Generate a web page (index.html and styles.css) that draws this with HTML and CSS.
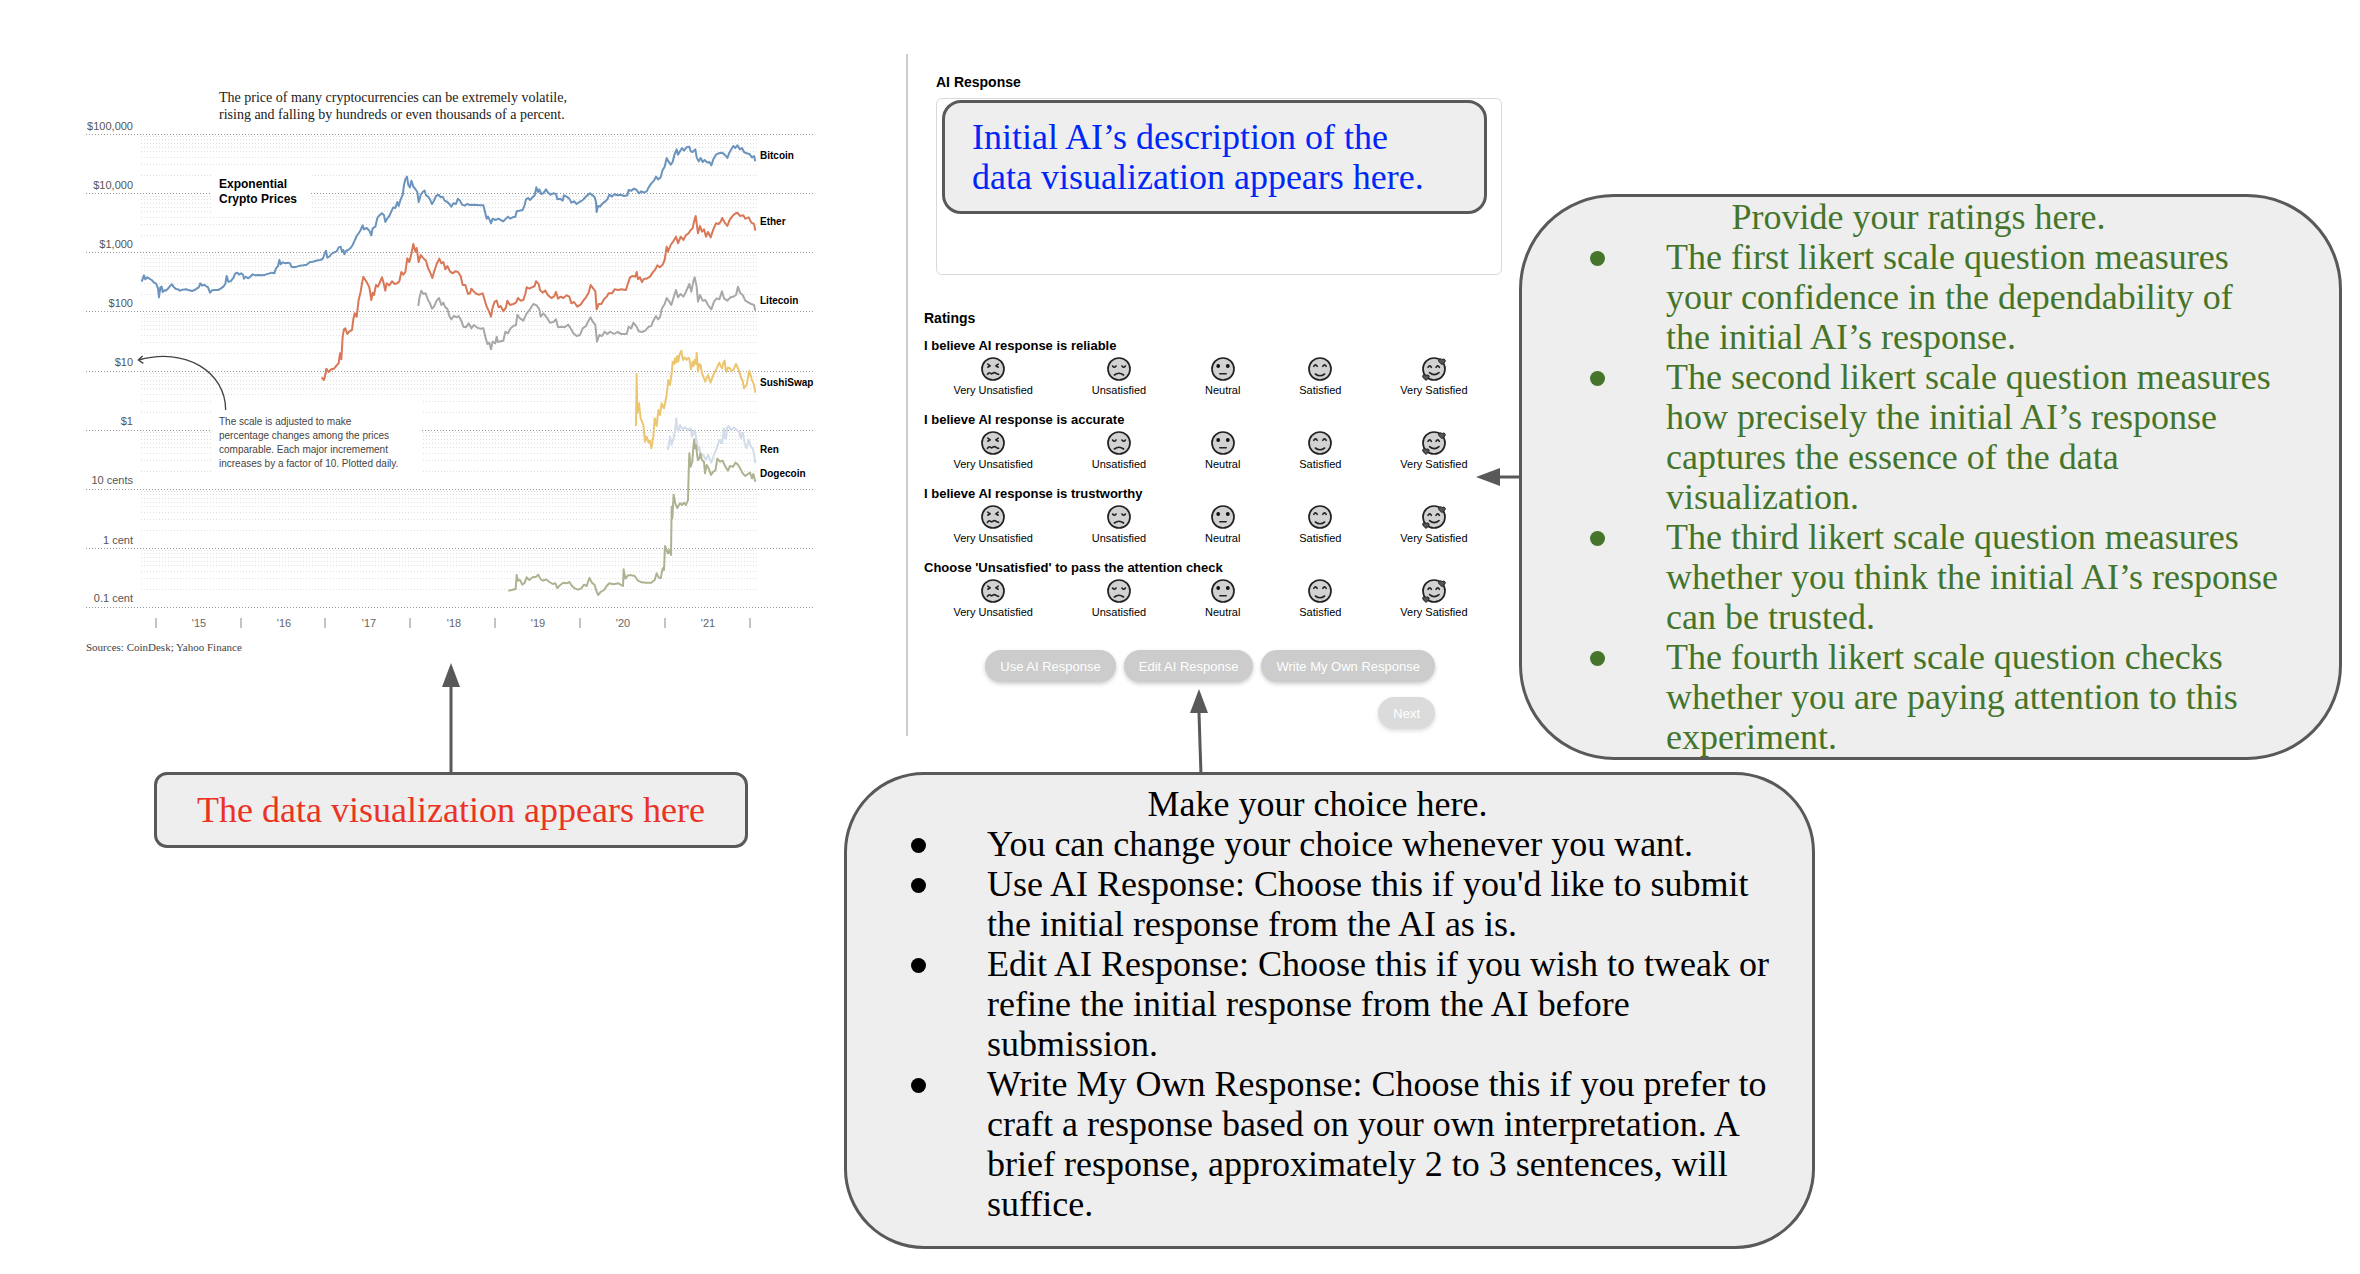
FILE: index.html
```html
<!DOCTYPE html>
<html lang="en">
<head>
<meta charset="utf-8">
<title>Study instructions</title>
<link rel="stylesheet" href="styles.css">
</head>
<body>
<svg class="defs" aria-hidden="true">
  <symbol id="face-very-unsatisfied" viewBox="0 0 24 24">
    <circle class="skin" cx="12" cy="12" r="11"/>
    <path class="ink" d="M6.8 7.2 9.2 8.8 6.8 10.2M17.2 7.2 14.8 8.8 17.2 10.2M6.4 17.4q1.4-2.4 2.8-1.2t2.8 0 2.8 0 2.8 1.2"/>
  </symbol>
  <symbol id="face-unsatisfied" viewBox="0 0 24 24">
    <circle class="skin" cx="12" cy="12" r="11"/>
    <path class="ink" d="M5.6 9q1.7 2.4 3.4 0M15 9q1.7 2.4 3.4 0M7.4 18q4.6-3.6 9.2 0"/>
  </symbol>
  <symbol id="face-neutral" viewBox="0 0 24 24">
    <circle class="skin" cx="12" cy="12" r="11"/>
    <circle class="dot" cx="7.2" cy="9" r="1.9"/><circle class="dot" cx="16.8" cy="9" r="1.9"/>
    <path class="ink" d="M8.8 16.8h6.4"/>
  </symbol>
  <symbol id="face-satisfied" viewBox="0 0 24 24">
    <circle class="skin" cx="12" cy="12" r="11"/>
    <path class="ink" d="M5.8 9.4q1.7-3 3.4 0M14.8 9.4q1.7-3 3.4 0M7.4 17q4.6 3.4 9.2 0"/>
  </symbol>
  <symbol id="face-very-satisfied" viewBox="0 0 24 24">
    <circle class="skin" cx="12" cy="12" r="11"/>
    <path class="ink" d="M6 10.4q1.7-3 3.4 0M14 10.4q1.7-3 3.4 0M7.6 15.6q4.6 4 9.4 0"/>
    <path class="heart" d="M20 7.6 16.8 4.6q-.9-2.4 1.2-2.8 1.4-.1 2 1 .8-1.1 2.2-.7 1.8.9.8 2.8Z"/>
    <path class="heart" d="M4 23.400 .9 20.400q-.8-2.3 1.1-2.700 1.4-.1 2 1 .8-1.1 2.2-.7 1.7.9.7 2.700Z"/>
  </symbol>
</svg>

<main class="page">
  <div class="top">
    <figure class="chart">
      <svg class="plot" viewBox="80 80 740 580" role="img" aria-label="Exponential crypto prices">
        <defs>
          <g id="decade" class="minor">
            <path d="M141 2.500H757M141 5.500H757M141 9.500H757M141 13.500H757M141 17.500H757M141 23.500H757M141 30.500H757M141 41.500H757"/>
          </g>
        </defs>
        <use href="#decade" y="134"/><use href="#decade" y="194"/><use href="#decade" y="253"/><use href="#decade" y="312"/>
        <use href="#decade" y="371"/><use href="#decade" y="430"/><use href="#decade" y="489"/><use href="#decade" y="548"/>
        <path class="major" d="M86 134.500H815M86 193.500H815M86 252.500H815M86 311.500H815M86 371.500H815M86 430.500H815M86 489.500H815M86 548.500H815M86 607.500H815"/>
        <rect class="blank" x="211" y="174" width="100" height="40"/>
        <rect class="blank" x="211" y="395" width="211" height="86"/>

        <g class="lines" transform="translate(60 70) scale(.33333)">
          <polyline class="btc" points="245,635 252,616 256,628 262,622 268,626 275,630 282,638 288,640 294,655 297,682 301,652 305,650 308,666 313,661 318,662 325,655 330,648 336,643 342,652 348,657 354,658 360,662 368,659 378,658 388,661 396,663 404,660 410,656 416,652 421,640 426,647 432,644 438,648 444,652 450,668 456,661 464,660 474,660 482,656 490,650 496,642 500,618 505,635 512,634 520,624 526,610 532,608 537,614 544,610 549,614 552,626 558,620 564,625 572,619 578,613 586,616 596,615 606,616 616,614 626,611 636,608 643,610 648,595 654,588 658,570 662,583 668,577 676,580 684,578 690,580 694,590 702,592 710,590 720,587 730,586 740,584 750,576 758,575 766,573 774,571 780,570 788,567 794,552 798,542 802,563 808,560 814,552 822,547 830,544 836,532 842,530 846,545 850,540 853,553 858,543 864,540 872,534 878,525 884,512 890,498 896,490 902,480 908,466 912,478 920,474 928,482 934,496 938,475 946,470 952,444 958,436 966,430 972,436 976,456 982,445 988,438 994,424 1000,412 1006,414 1012,396 1016,408 1022,388 1028,375 1032,345 1036,328 1041,320 1045,345 1050,352 1054,332 1060,350 1066,357 1072,366 1076,396 1082,376 1088,366 1094,362 1098,376 1104,380 1110,388 1116,402 1122,392 1128,378 1136,374 1142,382 1148,380 1154,392 1162,396 1168,402 1174,410 1180,400 1188,402 1194,386 1200,392 1206,404 1214,407 1222,402 1230,405 1240,404 1250,405 1260,406 1270,406 1276,430 1280,446 1284,440 1290,452 1293,460 1298,446 1306,450 1316,446 1322,450 1330,454 1338,446 1344,440 1350,446 1358,442 1366,440 1370,424 1378,422 1388,420 1394,405 1398,388 1404,384 1410,390 1418,382 1424,376 1429,352 1434,366 1438,358 1444,372 1450,370 1458,358 1464,368 1472,374 1480,370 1488,372 1492,388 1500,386 1508,392 1512,376 1520,380 1528,386 1534,398 1542,394 1550,402 1558,396 1566,392 1574,384 1582,376 1590,370 1598,376 1604,382 1608,396 1610,426 1614,408 1620,410 1628,400 1636,394 1642,388 1648,374 1656,380 1664,372 1672,376 1682,374 1692,378 1702,376 1706,360 1714,362 1722,356 1730,360 1736,370 1744,364 1752,368 1760,364 1766,352 1774,340 1782,332 1788,320 1794,328 1802,322 1808,300 1814,290 1820,264 1824,272 1832,284 1838,276 1844,252 1850,238 1854,254 1860,244 1866,234 1872,242 1880,232 1888,230 1892,244 1898,246 1906,238 1910,262 1916,274 1922,264 1928,276 1934,270 1942,278 1948,276 1954,286 1960,268 1968,254 1976,250 1986,248 1994,254 2002,264 2008,248 2014,238 2020,228 2026,234 2032,226 2040,238 2046,234 2052,246 2060,250 2068,252 2076,262 2082,258 2086,274"/>
          <polyline class="ltc" points="1075,708 1078,685 1084,662 1090,672 1097,670 1104,690 1110,700 1116,716 1122,710 1130,692 1137,684 1144,705 1150,698 1156,712 1162,716 1168,738 1174,748 1182,738 1190,742 1196,738 1204,752 1210,770 1218,772 1226,760 1234,775 1242,765 1250,772 1260,776 1270,775 1276,800 1282,822 1288,818 1293,838 1298,815 1306,820 1310,800 1314,816 1322,814 1330,812 1336,785 1344,790 1352,775 1360,768 1368,765 1372,735 1380,745 1390,752 1400,730 1410,718 1420,702 1430,706 1438,718 1442,740 1450,730 1460,742 1470,758 1480,756 1488,748 1494,772 1504,770 1514,772 1524,764 1530,772 1540,790 1550,798 1560,795 1568,775 1578,768 1584,755 1592,742 1598,755 1606,765 1611,815 1618,795 1626,798 1634,785 1642,792 1650,785 1662,792 1672,786 1684,792 1700,792 1706,770 1714,775 1720,758 1730,770 1736,784 1746,786 1756,782 1766,770 1774,768 1780,752 1788,738 1794,748 1800,742 1806,715 1814,702 1820,684 1828,695 1834,705 1840,685 1848,660 1854,682 1862,672 1870,680 1878,665 1888,642 1894,665 1900,635 1904,622 1910,650 1914,695 1920,675 1928,692 1936,690 1944,705 1954,718 1962,695 1970,685 1978,688 1986,664 1992,685 2002,692 2012,682 2020,680 2028,675 2034,650 2040,668 2048,675 2056,692 2066,698 2074,702 2082,705 2086,722"/>
          <polyline class="eth" points="785,922 792,930 797,910 799,896 806,906 814,898 822,896 830,886 836,880 840,850 844,868 848,800 852,778 856,775 862,792 868,784 876,780 880,748 884,730 890,740 896,690 902,665 906,640 910,620 916,630 922,640 928,652 934,690 938,668 942,675 948,645 954,650 960,636 966,622 971,640 976,662 980,640 988,646 996,634 1004,642 1012,640 1018,634 1024,606 1030,614 1036,606 1042,565 1048,576 1054,552 1060,522 1066,545 1070,534 1076,576 1082,555 1090,565 1098,572 1104,594 1110,606 1117,624 1122,606 1130,582 1138,566 1144,580 1150,576 1156,598 1162,588 1170,604 1178,610 1186,604 1194,606 1202,618 1208,645 1216,645 1224,672 1230,670 1234,656 1242,665 1250,672 1258,674 1268,670 1274,690 1280,710 1286,722 1293,740 1298,712 1304,695 1310,692 1316,712 1322,708 1330,724 1338,712 1342,692 1350,705 1360,702 1368,698 1374,684 1382,692 1390,690 1396,672 1400,652 1408,656 1416,652 1424,648 1428,634 1436,642 1440,660 1448,668 1456,662 1464,676 1474,684 1482,680 1488,666 1494,686 1502,680 1510,684 1520,676 1528,680 1534,700 1542,696 1552,710 1562,704 1570,692 1578,682 1586,668 1592,645 1600,656 1606,664 1610,718 1616,702 1624,702 1632,688 1640,680 1646,670 1656,670 1664,658 1674,660 1684,658 1698,660 1704,640 1710,622 1718,618 1726,620 1730,606 1734,628 1740,622 1746,636 1752,626 1760,626 1770,620 1778,608 1786,598 1792,586 1800,592 1808,584 1814,570 1820,530 1824,545 1832,525 1840,514 1848,500 1854,520 1862,500 1870,510 1878,495 1886,490 1892,480 1898,475 1902,455 1907,438 1914,490 1920,468 1926,485 1932,478 1938,500 1944,486 1952,502 1960,478 1968,460 1976,462 1982,455 1987,444 1994,458 2002,468 2008,452 2016,440 2024,432 2032,428 2040,438 2050,436 2056,446 2066,442 2074,458 2082,462 2086,482"/>
        </g>
        <g class="lines" transform="translate(440 340) scale(.33333)">
          <polyline class="sushi" points="588,258 590,102 592,220 597,190 602,235 610,255 615,305 620,290 626,308 630,302 634,325 640,290 644,235 650,258 655,210 660,225 665,190 672,205 680,165 685,120 690,135 695,100 698,65 702,72 705,55 708,68 712,48 715,65 718,45 724,32 727,52 730,60 734,52 740,60 744,54 748,55 753,88 758,65 761,78 764,60 768,72 770,38 774,95 778,72 782,75 786,100 790,110 796,125 804,105 812,128 820,105 830,85 838,68 842,78 846,85 850,68 854,62 857,90 860,95 864,82 870,85 874,94 880,90 888,72 896,90 904,115 908,122 912,145 920,135 928,92 936,120 942,135 946,158"/>
          <polyline class="ren" points="684,330 690,290 695,315 702,290 706,265 709,235 712,270 716,272 720,255 728,268 736,262 744,270 752,265 756,290 760,278 764,272 768,290 770,300 774,330 778,320 782,345 790,345 798,360 804,345 814,368 822,345 830,325 838,300 846,310 852,265 855,295 858,295 862,262 866,258 874,270 882,262 890,270 898,275 902,295 908,278 914,310 920,325 926,300 932,318 940,330 946,370"/>
          <polyline class="doge" points="205,752 215,750 227,747 230,705 234,722 240,720 247,734 254,728 260,712 268,720 278,712 288,710 295,704 302,718 310,722 318,718 328,726 338,732 346,730 352,744 360,736 370,728 380,730 388,726 396,738 404,745 414,749 424,745 432,734 440,738 448,714 456,728 464,735 470,755 474,765 482,756 492,750 500,738 508,730 520,733 535,730 549,738 551,688 556,716 564,706 574,706 584,708 594,722 605,727 618,728 634,728 644,720 650,700 656,712 662,715 668,685 672,690 675,618 680,630 684,640 688,630 693,645 695,500 697,535 701,464 706,490 712,504 720,490 726,495 732,488 738,495 744,480 746,400 748,340 752,380 757,365 760,320 763,298 765,325 768,315 772,350 774,360 778,355 781,340 786,360 792,365 795,400 800,375 806,385 813,405 820,395 826,392 832,356 840,365 848,362 856,380 864,392 870,378 880,380 886,368 894,374 902,388 908,400 916,408 924,402 930,398 936,415 940,402 946,425"/>
        </g>
        <g class="pointer" transform="translate(60 340) scale(.33333)">
          <path d="M497 210C497 95 375 20 236 60M248 48 235 60 250 70"/>
        </g>

        <g class="lead">
          <text x="219" y="102">The price of many cryptocurrencies can be extremely volatile,</text>
          <text x="219" y="119">rising and falling by hundreds or even thousands of a percent.</text>
        </g>
        <g class="heading">
          <text x="219" y="188">Exponential</text>
          <text x="219" y="203">Crypto Prices</text>
        </g>
        <g class="axis-y">
          <text x="133" y="130">$100,000</text><text x="133" y="189">$10,000</text><text x="133" y="248">$1,000</text>
          <text x="133" y="307">$100</text><text x="133" y="366">$10</text><text x="133" y="425">$1</text>
          <text x="133" y="484">10 cents</text><text x="133" y="544">1 cent</text><text x="133" y="602">0.1 cent</text>
        </g>
        <g class="note">
          <text x="219" y="425">The scale is adjusted to make</text>
          <text x="219" y="439">percentage changes among the prices</text>
          <text x="219" y="453">comparable. Each major incremement</text>
          <text x="219" y="467">increases by a factor of 10. Plotted daily.</text>
        </g>
        <g class="series">
          <text x="760" y="159">Bitcoin</text><text x="760" y="225">Ether</text><text x="760" y="304">Litecoin</text>
          <text x="760" y="386">SushiSwap</text><text x="760" y="453">Ren</text><text x="760" y="477">Dogecoin</text>
        </g>
        <path class="ticks" d="M156 618v10M241 618v10M325 618v10M410 618v10M495 618v10M580 618v10M665 618v10M750 618v10"/>
        <g class="axis-x">
          <text x="199" y="627">'15</text><text x="284" y="627">'16</text><text x="369" y="627">'17</text><text x="454" y="627">'18</text>
          <text x="538" y="627">'19</text><text x="623" y="627">'20</text><text x="708" y="627">'21</text>
        </g>
        <text class="source" x="86" y="651">Sources: CoinDesk; Yahoo Finance</text>
      </svg>
    </figure>

    <form class="survey">
      <div class="response">
        <label class="title" for="ai-response">AI Response</label>
        <textarea id="ai-response" class="response-box" readonly></textarea>
        <p class="callout callout-initial">Initial AI’s description of the<br>data visualization appears here.</p>
      </div>
      <section class="ratings">
        <h2 class="title">Ratings</h2>
        <fieldset class="question">
          <legend>I believe AI response is reliable</legend>
          <div class="scale">
            <label><input type="radio" name="reliable"><svg class="face"><use href="#face-very-unsatisfied"/></svg>Very Unsatisfied</label>
            <label><input type="radio" name="reliable"><svg class="face"><use href="#face-unsatisfied"/></svg>Unsatisfied</label>
            <label><input type="radio" name="reliable"><svg class="face"><use href="#face-neutral"/></svg>Neutral</label>
            <label><input type="radio" name="reliable"><svg class="face"><use href="#face-satisfied"/></svg>Satisfied</label>
            <label><input type="radio" name="reliable"><svg class="face"><use href="#face-very-satisfied"/></svg>Very Satisfied</label>
          </div>
        </fieldset>
        <fieldset class="question">
          <legend>I believe AI response is accurate</legend>
          <div class="scale">
            <label><input type="radio" name="accurate"><svg class="face"><use href="#face-very-unsatisfied"/></svg>Very Unsatisfied</label>
            <label><input type="radio" name="accurate"><svg class="face"><use href="#face-unsatisfied"/></svg>Unsatisfied</label>
            <label><input type="radio" name="accurate"><svg class="face"><use href="#face-neutral"/></svg>Neutral</label>
            <label><input type="radio" name="accurate"><svg class="face"><use href="#face-satisfied"/></svg>Satisfied</label>
            <label><input type="radio" name="accurate"><svg class="face"><use href="#face-very-satisfied"/></svg>Very Satisfied</label>
          </div>
        </fieldset>
        <fieldset class="question">
          <legend>I believe AI response is trustworthy</legend>
          <div class="scale">
            <label><input type="radio" name="trustworthy"><svg class="face"><use href="#face-very-unsatisfied"/></svg>Very Unsatisfied</label>
            <label><input type="radio" name="trustworthy"><svg class="face"><use href="#face-unsatisfied"/></svg>Unsatisfied</label>
            <label><input type="radio" name="trustworthy"><svg class="face"><use href="#face-neutral"/></svg>Neutral</label>
            <label><input type="radio" name="trustworthy"><svg class="face"><use href="#face-satisfied"/></svg>Satisfied</label>
            <label><input type="radio" name="trustworthy"><svg class="face"><use href="#face-very-satisfied"/></svg>Very Satisfied</label>
          </div>
        </fieldset>
        <fieldset class="question">
          <legend>Choose 'Unsatisfied' to pass the attention check</legend>
          <div class="scale">
            <label><input type="radio" name="attention"><svg class="face"><use href="#face-very-unsatisfied"/></svg>Very Unsatisfied</label>
            <label><input type="radio" name="attention"><svg class="face"><use href="#face-unsatisfied"/></svg>Unsatisfied</label>
            <label><input type="radio" name="attention"><svg class="face"><use href="#face-neutral"/></svg>Neutral</label>
            <label><input type="radio" name="attention"><svg class="face"><use href="#face-satisfied"/></svg>Satisfied</label>
            <label><input type="radio" name="attention"><svg class="face"><use href="#face-very-satisfied"/></svg>Very Satisfied</label>
          </div>
        </fieldset>
      </section>
      <div class="actions">
        <button type="button">Use AI Response</button>
        <button type="button">Edit AI Response</button>
        <button type="button">Write My Own Response</button>
        <button type="submit" class="next">Next</button>
      </div>
    </form>

    <section class="callout callout-ratings">
      <svg class="arrow arrow-left" viewBox="0 0 46 20"><path d="M24 10H46"/><path class="head" d="M0 10 24 1V19Z"/></svg>
      <p class="callout-title">Provide your ratings here.</p>
      <ul>
        <li>The first likert scale question measures<br>your confidence in the dependability of<br>the initial AI’s response.</li>
        <li>The second likert scale question measures<br>how precisely the initial AI’s response<br>captures the essence of the data<br>visualization.</li>
        <li>The third likert scale question measures<br>whether you think the initial AI’s response<br>can be trusted.</li>
        <li>The fourth likert scale question checks<br>whether you are paying attention to this<br>experiment.</li>
      </ul>
    </section>
  </div>

  <div class="bottom">
    <p class="callout callout-chart">
      <svg class="arrow arrow-chart" viewBox="0 0 20 112"><path d="M10 24V112"/><path class="head" d="M10 0 1 24H19Z"/></svg>
      The data visualization appears here
    </p>
    <section class="callout callout-choice">
      <svg class="arrow arrow-choice" viewBox="0 0 20 86"><path d="M9 24 11 86"/><path class="head" d="M9 0 0 24H18Z"/></svg>
      <p class="callout-title">Make your choice here.</p>
      <ul>
        <li>You can change your choice whenever you want.</li>
        <li>Use AI Response: Choose this if you'd like to submit<br>the initial response from the AI as is.</li>
        <li>Edit AI Response: Choose this if you wish to tweak or<br>refine the initial response from the AI before<br>submission.</li>
        <li>Write My Own Response: Choose this if you prefer to<br>craft a response based on your own interpretation. A<br>brief response, approximately 2 to 3 sentences, will<br>suffice.</li>
      </ul>
    </section>
  </div>
</main>
</body>
</html>
```

FILE: styles.css
```css
* { box-sizing: border-box; }

body {
  margin: 0;
  background: #fff;
  color: #000;
  font-family: "Liberation Sans", Arial, sans-serif;
}

p, h2, ul, figure, fieldset { margin: 0; padding: 0; }
fieldset { border: 0; min-width: 0; }
ul { list-style: none; }

.defs { position: absolute; width: 0; height: 0; }

.page {
  display: grid;
  gap: 12px;
  padding: 54px 0 20px;
}

.top {
  display: grid;
  grid-template-columns: 906fr 613fr 841fr;
  align-items: start;
}

/* Chart */
.chart { padding: 26px 86px 0 80px; }
.plot { display: block; width: 100%; }
.minor { stroke: #dedede; stroke-dasharray: 1 2; }
.major { stroke: #999; stroke-dasharray: 1 2; }
.blank { fill: #fff; }
.lines { fill: none; stroke-width: 6; stroke-linejoin: round; }
.btc { stroke: #6a93bd; }
.eth { stroke: #d97757; }
.ltc { stroke: #a8a8a8; }
.sushi { stroke: #ecc66f; }
.ren { stroke: #d2dcea; }
.doge { stroke: #aeb291; }
.pointer { fill: none; stroke: #444; stroke-width: 4; }
.ticks { stroke: #888; fill: none; }
.lead { font: 14px Georgia, "Liberation Serif", serif; fill: #222; }
.source { font: 11px Georgia, "Liberation Serif", serif; fill: #444; }
.heading { font-size: 12px; font-weight: bold; }
.series { font-size: 10px; font-weight: bold; }
.note { font-size: 10px; fill: #444; }
.axis-y { font-size: 11px; fill: #555; text-anchor: end; }
.axis-x { font-size: 11px; fill: #666; text-anchor: middle; }

/* Survey */
.survey {
  border-left: 2px solid #ccc;
  padding: 19px 17px 5px 16px;
  min-height: 682px;
}
.title {
  display: block;
  font-size: 14px;
  line-height: 18px;
  font-weight: bold;
}
.response { position: relative; padding-left: 12px; }
.response-box {
  display: block;
  width: 100%;
  height: 177px;
  margin-top: 7px;
  border: 1px solid #d9d9d9;
  border-radius: 6px;
  resize: none;
}
.ratings { margin-top: 34px; padding-right: 5px; }
.question { height: 74px; padding-top: 11px; }
.question legend {
  float: left;
  width: 100%;
  padding: 0;
  font-size: 13px;
  line-height: 16px;
  font-weight: bold;
}
.scale {
  clear: both;
  display: flex;
  justify-content: space-around;
  padding-top: 3px;
}
.scale label {
  display: flex;
  flex-direction: column;
  align-items: center;
  gap: 2px;
  font-size: 11px;
  line-height: 14px;
}
.scale input { position: absolute; opacity: 0; pointer-events: none; }
.face { width: 24px; height: 24px; }
.skin { fill: #d2d2d2; stroke: #222; stroke-width: 1.7; }
.ink { fill: none; stroke: #222; stroke-width: 1.6; stroke-linecap: round; stroke-linejoin: round; }
.dot { fill: #111; }
.heart { fill: #555; stroke: #222; stroke-width: 1; }

.actions {
  display: flex;
  flex-wrap: wrap;
  justify-content: flex-end;
  gap: 15px 8px;
  padding: 27px 67px 0 0;
}
.actions button {
  height: 32px;
  padding: 0 15px;
  border: 0;
  border-radius: 16px;
  background: #ccc;
  color: #fff;
  font: 13px "Liberation Sans", Arial, sans-serif;
  box-shadow: 0 2px 4px #0003;
}
.actions .next { background: #dbdbdb; box-shadow: 0 2px 4px #0002; }

/* Callouts */
.callout {
  position: relative;
  border: 3px solid #595959;
  background: #eee;
  font: 36px/40px Georgia, "Liberation Serif", serif;
  white-space: nowrap;
}
.callout-title { text-align: center; }
.callout li { position: relative; }
.callout li::before {
  content: "";
  position: absolute;
  left: -76px;
  top: 14px;
  width: 15px;
  height: 15px;
  border-radius: 50%;
  background: currentColor;
}

.callout-initial {
  position: absolute;
  left: 18px;
  right: 15px;
  top: 27px;
  padding: 14px 27px;
  border-radius: 19px;
  color: #0027f5;
}
.callout-ratings {
  margin: 140px 18px 0 0;
  border-radius: 95px;
  color: #44752b;
}
.callout-ratings .callout-title { padding-right: 24px; }
.callout-ratings ul { padding-left: 144px; }

.bottom {
  display: grid;
  grid-template-columns: 844fr 971fr 545fr;
  align-items: start;
}
.callout-chart {
  margin: 0 96px 0 154px;
  padding: 15px 0;
  border-radius: 13px;
  color: #eb3323;
  text-align: center;
}
.callout-choice {
  padding: 9px 0 22px;
  border-radius: 80px;
}
.callout-choice .callout-title { padding-right: 24px; }
.callout-choice ul { padding-left: 140px; }

/* Arrows reach out from their callout */
.arrow { position: absolute; fill: none; stroke: #595959; stroke-width: 3; }
.arrow .head { fill: #595959; stroke: none; }
.arrow-left { right: 100%; top: 50%; width: 46px; height: 20px; margin-top: -10px; }
.arrow-chart { bottom: 100%; left: 50%; width: 20px; height: 112px; margin-left: -10px; }
.arrow-choice { bottom: 100%; left: 343px; width: 20px; height: 86px; }
```
